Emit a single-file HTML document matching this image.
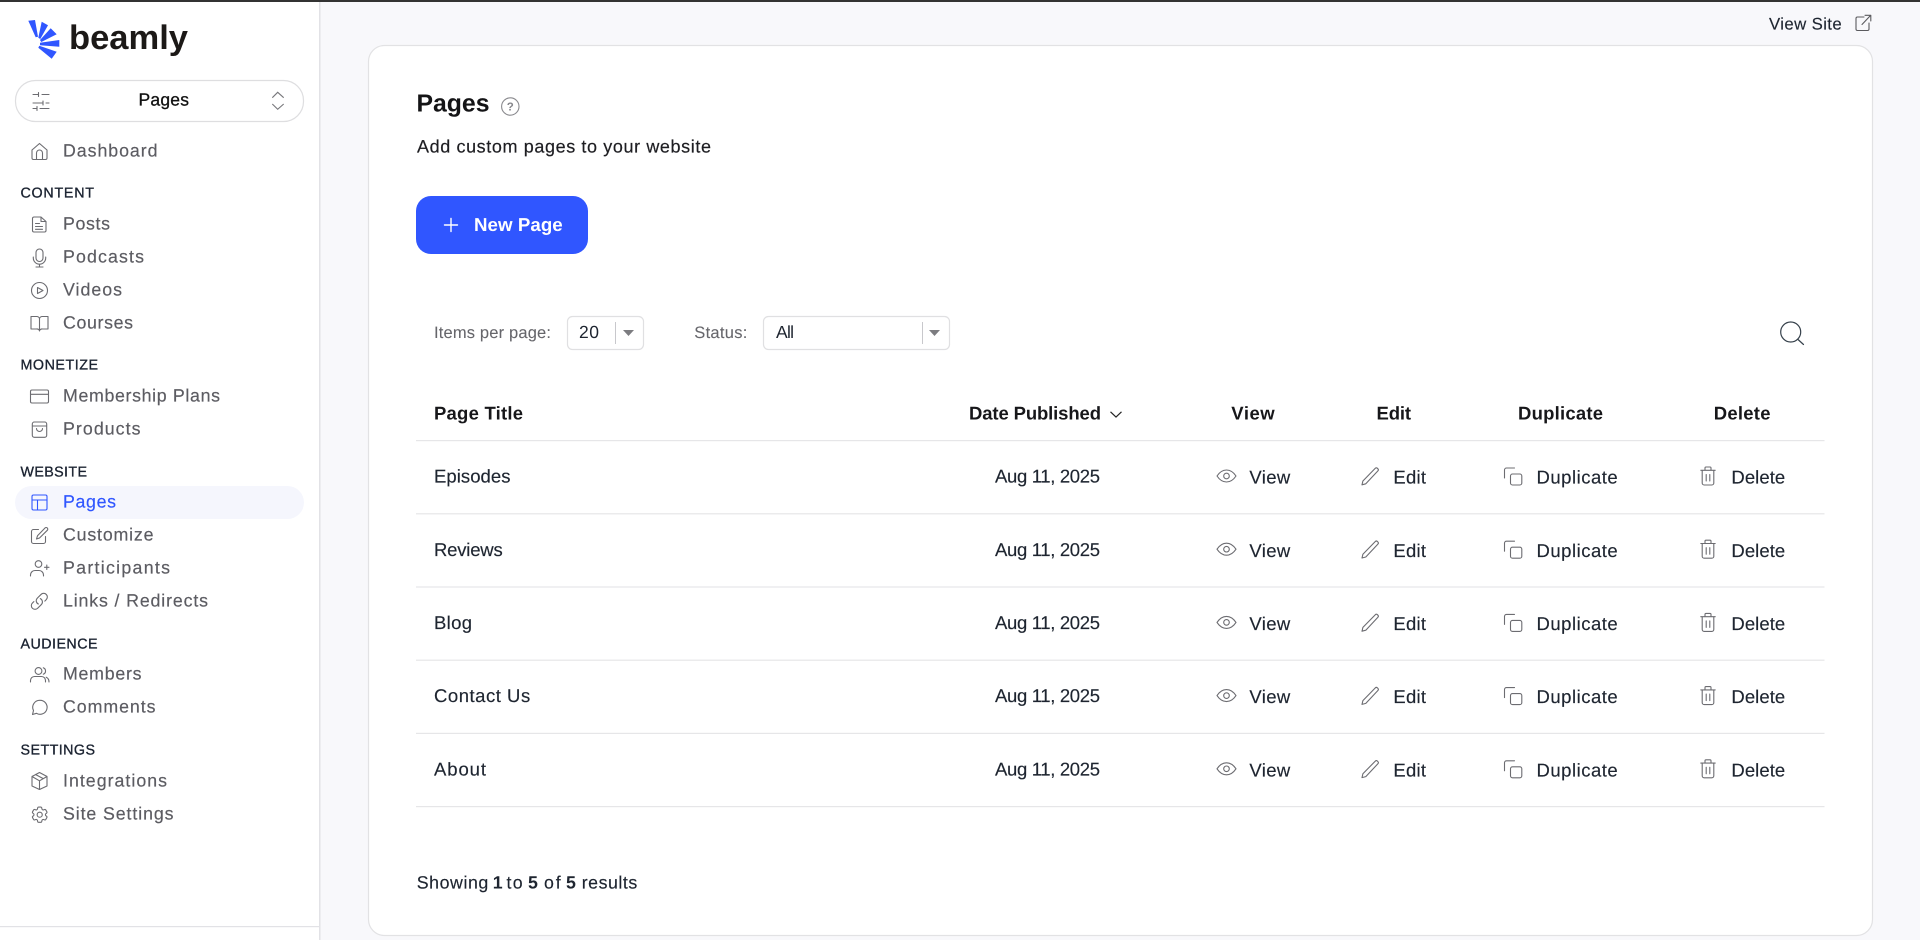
<!DOCTYPE html>
<html lang="en">
<head>
<meta charset="utf-8">
<title>Pages</title>
<style>
html,body{margin:0;padding:0;width:1920px;height:940px;overflow:hidden;background:#f8f8fb}
svg{display:block}
text{font-family:"Liberation Sans",sans-serif;text-rendering:geometricPrecision;white-space:pre}
.nav{font-size:17.800px;fill:#5c5c62;stroke:#5c5c62;stroke-width:.18;transform:translateY(-.7px)}
.lab{font-size:14.300px;fill:#1a2230;stroke:#1a2230;stroke-width:.32;transform:translateY(-.5px)}
.row{font-size:18.500px;fill:#1e2530;stroke:#1e2530;stroke-width:.16;transform:translateY(-.7px)}
.hd{font-size:18.500px;font-weight:700;fill:#17171a;transform:translateY(-.3px)}
.flt{font-size:16.500px;fill:#66666b;stroke:#66666b;stroke-width:.08;transform:translateY(-.5px)}
.ic{fill:none;stroke:#6c6c71;stroke-width:1.100;stroke-linecap:round;stroke-linejoin:round}
</style>
</head>
<body>
<svg width="1920" height="940" viewBox="0 0 1920 940" xmlns="http://www.w3.org/2000/svg">
<defs>
<g id="eye" class="ic"><path d="M1217 476C1220 471.500 1223 470 1226.500 470C1230 470 1233 471.500 1236 476C1233 480.500 1230 482 1226.500 482C1223 482 1220 480.500 1217 476Z"/><circle cx="1226.500" cy="476" r="2.800"/></g>
<g id="pen" class="ic"><path d="M1362 484.800L1362.900 481L1375.300 468.300a1.500 1.500 0 0 1 2.100 0L1377.900 468.800a1.500 1.500 0 0 1 0 2.100L1365.800 483.800Z"/></g>
<g id="dup" class="ic"><path d="M1504.500 478V470a2 2 0 0 1 2-2H1514.500"/><rect x="1510.500" y="474" width="11.300" height="11" rx="2"/></g>
<g id="trash" class="ic"><path d="M1700.800 470.300H1715.200M1705 470V468a1 1 0 0 1 1-1H1710a1 1 0 0 1 1 1V470M1702.200 470.300V483a2 2 0 0 0 2 2H1711.800a2 2 0 0 0 2-2V470.300M1706.200 474.500V481M1709.800 474.500V481"/></g>
</defs>

<rect width="1920" height="940" fill="#f8f8fb"/>

<!-- sidebar -->
<rect x="0" y="0" width="319" height="940" fill="#fff"/>
<rect x="319" y="0" width="1.500" height="940" fill="#e2e2e6"/>
<rect x="0" y="926" width="319" height="1.200" fill="#e2e2e6"/>
<rect x="0" y="0" width="1920" height="2" fill="#333"/>

<!-- logo -->
<g fill="#3056ff">
<path d="M28.300 20.700L35 20L38 36.700L35.700 37.300Z"/>
<path d="M41.700 21.700L48 25.300L40.300 39L38.300 37.700Z"/>
<path d="M50.700 28.300L56.700 34.300L41.300 42L40 40Z"/>
<path d="M59.300 40V46.700L40 45.300V42.700Z"/>
<path d="M56.700 51.700L51.700 58.700L38.300 47.700L39.300 45.700Z"/>
</g>
<text x="69" y="49" textLength="119" lengthAdjust="spacingAndGlyphs" fill="#1c1917" style="font-size:34px;font-weight:700">beamly</text>

<!-- page selector -->
<rect x="15.500" y="80.500" width="288" height="41" rx="20" fill="#fff" stroke="#dedee0" stroke-width="1.200"/>
<path class="ic" d="M33 94.500H38.500M38.500 92.500V96.500M42 94.500H49M33 103H43M43 101V105M46 103H49M33 108.500H37M37 106.500V110.500M40 108.500H49"/>
<text x="138.500" y="105.300" textLength="50.500" fill="#111" stroke="#111" stroke-width=".3" style="font-size:17.500px">Pages</text>
<path fill="none" stroke="#77777b" stroke-width="1.100" d="M272.300 97.700L277.700 92.300L283.700 97.700M272.300 104L277.700 109.300L283.700 104"/>

<!-- nav text -->
<text class="nav" x="63" y="157" textLength="94.500">Dashboard</text>
<text class="lab" x="20.500" y="198" textLength="73.500">CONTENT</text>
<text class="nav" x="63" y="230" textLength="47">Posts</text>
<text class="nav" x="63" y="263" textLength="81">Podcasts</text>
<text class="nav" x="63" y="296" textLength="59">Videos</text>
<text class="nav" x="63" y="329" textLength="70">Courses</text>
<text class="lab" x="20.500" y="370" textLength="77.500">MONETIZE</text>
<text class="nav" x="63" y="402" textLength="157">Membership Plans</text>
<text class="nav" x="63" y="435" textLength="77.500">Products</text>
<text class="lab" x="20.500" y="477" textLength="66.500">WEBSITE</text>
<rect x="15" y="486" width="289" height="33" rx="16.500" fill="#f5f6fd"/>
<text class="nav" x="63" y="508" textLength="53" style="fill:#3056ff;stroke:#3056ff">Pages</text>
<text class="nav" x="63" y="541" textLength="90.500">Customize</text>
<text class="nav" x="63" y="574" textLength="107">Participants</text>
<text class="nav" x="63" y="607" textLength="145">Links / Redirects</text>
<text class="lab" x="20.500" y="649" textLength="77">AUDIENCE</text>
<text class="nav" x="63" y="680" textLength="78.500">Members</text>
<text class="nav" x="63" y="713" textLength="92.500">Comments</text>
<text class="lab" x="20.500" y="755" textLength="74.500">SETTINGS</text>
<text class="nav" x="63" y="787" textLength="104">Integrations</text>
<text class="nav" x="63" y="820" textLength="110.500">Site Settings</text>

<!-- nav icons -->
<g class="ic">
<g transform="translate(29.500 141.500)"><path d="M2.500 8.500L10 2L17.500 8.500V16.500a1.500 1.500 0 0 1-1.500 1.500H4a1.500 1.500 0 0 1-1.500-1.500ZM7 18V11.500a3 3 0 0 1 6 0V18"/></g>
<g transform="translate(29.500 214.500)"><path d="M4.500 2.500H11.500L16.500 7V16a1.500 1.500 0 0 1-1.500 1.500H4.500A1.500 1.500 0 0 1 3 16V4A1.500 1.500 0 0 1 4.500 2.500ZM11.500 2.500V7H16.500M6 9H10M6 12H13M6 14.800H13"/></g>
<g transform="translate(29.500 247.500)"><rect x="6.500" y="1.500" width="7" height="12.500" rx="3.500"/><path d="M3.800 9.500V10.500a6.200 6.200 0 0 0 12.400 0V9.500M10 16.800V19.500M6.500 19.500H13.500"/></g>
<g transform="translate(29.500 280.500)"><circle cx="10" cy="10" r="8"/><path d="M8 7L13.500 10L8 13Z"/></g>
<g transform="translate(29.500 313.500)"><path d="M1.500 3H7a3 3 0 0 1 3 2a3 3 0 0 1 3-2H18.500V15.500H13a3 3 0 0 0-3 1.500a3 3 0 0 0-3-1.500H1.500ZM10 5V17.500"/></g>
<g transform="translate(29.500 386.500)"><rect x="1" y="3.500" width="18" height="13" rx="1.500"/><path d="M1 7.800H19"/></g>
<g transform="translate(29.500 419.500)"><rect x="2.800" y="2.500" width="14.400" height="15.300" rx="2"/><path d="M3 6.500H17M7 9a3 3 0 0 0 6 0"/></g>
<g transform="translate(29.500 492.500)" style="stroke:#3056ff"><rect x="2.500" y="2.500" width="15" height="15" rx="1.500"/><path d="M2.500 7.500H17.500M8 7.500V17.500"/></g>
<g transform="translate(29.500 525.500)"><path d="M9 4H4a2 2 0 0 0-2 2V16a2 2 0 0 0 2 2H14a2 2 0 0 0 2-2V11"/><path d="M15.500 2.500a1.600 1.600 0 0 1 2.300 2.300L10 12.500L7 13.500L8 10.300Z"/></g>
<g transform="translate(29.500 558.500)"><circle cx="9" cy="5.500" r="3.300"/><path d="M1 17.500V16.500a4.500 4.500 0 0 1 4.500-4.500H9.500a4.500 4.500 0 0 1 4.500 4.500V17.500M15 8.800H19.500M17.300 6.500V11"/></g>
<g transform="translate(29.500 591.500) scale(.82)" style="stroke-width:1.350"><path d="M13.190 8.688a4.500 4.500 0 0 1 1.242 7.244l-4.500 4.500a4.500 4.500 0 0 1-6.364-6.364l1.757-1.757m13.350-.622l1.757-1.757a4.500 4.500 0 0 0-6.364-6.364l-4.500 4.500a4.500 4.500 0 0 0 1.242 7.244"/></g>
<g transform="translate(29.500 664.500)"><circle cx="9" cy="6.500" r="3.400"/><path d="M1 17.500V16a4 4 0 0 1 4-4H12a4 4 0 0 1 4 4V17.500M13.800 3.300a3.400 3.400 0 0 1 0 6.400M19.500 17.500c0-2-1-4-2.800-4.800"/></g>
<g transform="translate(29.500 697.500)"><path d="M10.500 2.800a7 7 0 1 1-3.500 13L3 17L4 13A7 7 0 0 1 10.500 2.800Z"/></g>
<g transform="translate(29.500 771.500)"><path d="M10 1L17.500 5V14.500L10 18L2.500 14.500V5ZM2.500 5L10 9.300L17.500 5M10 9.300V18M6 3L13.500 7"/></g>
<g transform="translate(29.500 804.500) scale(.85)" style="stroke-width:1.300"><path d="M9.594 3.940c.09-.542.56-.94 1.110-.94h2.593c.55 0 1.020.398 1.110.94l.213 1.281c.063.374.313.686.645.870.074.040.147.083.22.127.324.196.72.257 1.075.124l1.217-.456a1.125 1.125 0 0 1 1.370.490l1.296 2.247a1.125 1.125 0 0 1-.26 1.431l-1.003.827c-.293.24-.438.613-.431.992a6.759 6.759 0 0 1 0 .255c-.007.378.138.75.43.99l1.005.828c.424.35.534.954.26 1.430l-1.298 2.247a1.125 1.125 0 0 1-1.369.491l-1.217-.456c-.355-.133-.75-.072-1.076.124a6.570 6.570 0 0 1-.22.128c-.331.183-.581.495-.644.869l-.213 1.280c-.09.543-.56.941-1.110.941h-2.594c-.55 0-1.020-.398-1.110-.94l-.213-1.281c-.062-.374-.312-.686-.644-.87a6.520 6.520 0 0 1-.22-.127c-.325-.196-.72-.257-1.076-.124l-1.217.456a1.125 1.125 0 0 1-1.369-.49l-1.297-2.247a1.125 1.125 0 0 1 .26-1.431l1.004-.827c.292-.24.437-.613.43-.992a6.932 6.932 0 0 1 0-.255c.007-.378-.138-.75-.43-.99l-1.004-.828a1.125 1.125 0 0 1-.26-1.430l1.297-2.247a1.125 1.125 0 0 1 1.370-.491l1.216.456c.356.133.751.072 1.076-.124.072-.044.146-.087.22-.128.332-.183.582-.495.644-.869l.214-1.281Z"/><circle cx="12" cy="12" r="3"/></g>
</g>

<!-- view site -->
<text x="1769" y="29.500" textLength="72.700" fill="#1e2530" stroke="#1e2530" stroke-width=".14" style="font-size:16.800px">View Site</text>
<path fill="none" stroke="#5a5a5e" stroke-width="1.100" stroke-linecap="round" stroke-linejoin="round" d="M1864 17H1857.500a1.500 1.500 0 0 0-1.500 1.500V29a1.500 1.500 0 0 0 1.500 1.500H1867.500a1.500 1.500 0 0 0 1.500-1.500V23M1862 24.500L1870.500 15.500M1865 15.300H1870.800V21"/>

<!-- card -->
<rect x="368.500" y="45.500" width="1504" height="890" rx="16" fill="#fff" stroke="#e2e2e4" stroke-width="1.200"/>

<text x="416.500" y="111.300" textLength="73" fill="#141416" style="font-size:24.800px;font-weight:700">Pages</text>
<circle cx="510.300" cy="106.500" r="8.700" fill="none" stroke="#8a8a8e" stroke-width="1.100"/>
<text x="510.300" y="110.500" text-anchor="middle" fill="#85858a" style="font-size:11.500px;font-weight:700">?</text>
<text x="417" y="152.300" textLength="294" fill="#1e1e22" stroke="#1e1e22" stroke-width=".2" style="font-size:18px">Add custom pages to your website</text>

<rect x="416" y="196" width="172" height="58" rx="15" fill="#3056ff"/>
<path stroke="#fff" stroke-width="1.400" stroke-linecap="round" d="M444.500 225H457.500M451 218.500V231.500"/>
<text x="474" y="231" textLength="88.700" fill="#fff" style="font-size:18.700px;font-weight:700">New Page</text>

<!-- filters -->
<text class="flt" x="434" y="338.300" textLength="117">Items per page:</text>
<rect x="567.500" y="316.500" width="76" height="33" rx="5" fill="#fff" stroke="#e0e0e2" stroke-width="1.200"/>
<text x="579" y="338" textLength="20" fill="#1e2530" style="font-size:17.500px">20</text>
<rect x="615" y="322" width="1" height="22" fill="#c8c8cc"/>
<path d="M623 330H634L628.500 336Z" fill="#7c7c80"/>
<text class="flt" x="694.300" y="338.300" textLength="53">Status:</text>
<rect x="763.500" y="316.500" width="186" height="33" rx="5" fill="#fff" stroke="#e0e0e2" stroke-width="1.200"/>
<text x="776" y="338" textLength="18" fill="#1e2530" style="font-size:17.500px">All</text>
<rect x="922" y="322" width="1" height="22" fill="#c8c8cc"/>
<path d="M929 330H940L934.500 336Z" fill="#7c7c80"/>
<circle cx="1790.700" cy="332" r="10" fill="none" stroke="#36414b" stroke-width="1.200"/>
<path d="M1798 339.500L1803.500 344.500" stroke="#36414b" stroke-width="1.200" stroke-linecap="round"/>

<!-- table header -->
<text class="hd" x="434" y="420" textLength="89">Page Title</text>
<text class="hd" x="969" y="420" textLength="132">Date Published</text>
<path d="M1110.500 411.800L1116 417L1121.500 411.800" fill="none" stroke="#222" stroke-width="1.200"/>
<text class="hd" x="1231.300" y="420" textLength="43.400">View</text>
<text class="hd" x="1376.500" y="420" textLength="34.500">Edit</text>
<text class="hd" x="1518" y="420" textLength="85">Duplicate</text>
<text class="hd" x="1713.700" y="420" textLength="56.800">Delete</text>

<!-- rules -->
<g fill="#e6e6e8">
<rect x="416" y="440" width="1408.500" height="1.200"/>
<rect x="416" y="513.200" width="1408.500" height="1.200"/>
<rect x="416" y="586.400" width="1408.500" height="1.200"/>
<rect x="416" y="659.600" width="1408.500" height="1.200"/>
<rect x="416" y="732.800" width="1408.500" height="1.200"/>
<rect x="416" y="806" width="1408.500" height="1.200"/>
</g>

<!-- row 1 -->
<text class="row" x="434" y="483.300" textLength="76.500">Episodes</text>
<text class="row" x="995" y="483.300" textLength="105">Aug 11, 2025</text>
<use href="#eye"/><use href="#pen"/><use href="#dup"/><use href="#trash"/>
<text class="row" x="1249.400" y="484.300" textLength="40.900">View</text>
<text class="row" x="1393.400" y="484.300" textLength="32.600">Edit</text>
<text class="row" x="1536.500" y="484.300" textLength="81.200">Duplicate</text>
<text class="row" x="1731.400" y="484.300" textLength="53.800">Delete</text>

<!-- row 2 -->
<text class="row" x="434" y="556.500" textLength="68.700">Reviews</text>
<text class="row" x="995" y="556.500" textLength="105">Aug 11, 2025</text>
<g transform="translate(0 73.200)"><use href="#eye"/><use href="#pen"/><use href="#dup"/><use href="#trash"/></g>
<text class="row" x="1249.400" y="557.500" textLength="40.900">View</text>
<text class="row" x="1393.400" y="557.500" textLength="32.600">Edit</text>
<text class="row" x="1536.500" y="557.500" textLength="81.200">Duplicate</text>
<text class="row" x="1731.400" y="557.500" textLength="53.800">Delete</text>

<!-- row 3 -->
<text class="row" x="434" y="629.700" textLength="38">Blog</text>
<text class="row" x="995" y="629.700" textLength="105">Aug 11, 2025</text>
<g transform="translate(0 146.400)"><use href="#eye"/><use href="#pen"/><use href="#dup"/><use href="#trash"/></g>
<text class="row" x="1249.400" y="630.700" textLength="40.900">View</text>
<text class="row" x="1393.400" y="630.700" textLength="32.600">Edit</text>
<text class="row" x="1536.500" y="630.700" textLength="81.200">Duplicate</text>
<text class="row" x="1731.400" y="630.700" textLength="53.800">Delete</text>

<!-- row 4 -->
<text class="row" x="434" y="702.900" textLength="96.200">Contact Us</text>
<text class="row" x="995" y="702.900" textLength="105">Aug 11, 2025</text>
<g transform="translate(0 219.600)"><use href="#eye"/><use href="#pen"/><use href="#dup"/><use href="#trash"/></g>
<text class="row" x="1249.400" y="703.900" textLength="40.900">View</text>
<text class="row" x="1393.400" y="703.900" textLength="32.600">Edit</text>
<text class="row" x="1536.500" y="703.900" textLength="81.200">Duplicate</text>
<text class="row" x="1731.400" y="703.900" textLength="53.800">Delete</text>

<!-- row 5 -->
<text class="row" x="434" y="776.100" textLength="52">About</text>
<text class="row" x="995" y="776.100" textLength="105">Aug 11, 2025</text>
<g transform="translate(0 292.800)"><use href="#eye"/><use href="#pen"/><use href="#dup"/><use href="#trash"/></g>
<text class="row" x="1249.400" y="777.100" textLength="40.900">View</text>
<text class="row" x="1393.400" y="777.100" textLength="32.600">Edit</text>
<text class="row" x="1536.500" y="777.100" textLength="81.200">Duplicate</text>
<text class="row" x="1731.400" y="777.100" textLength="53.800">Delete</text>

<!-- pagination summary -->
<text class="row" style="font-size:17.800px" x="416.700" y="889" textLength="71.600">Showing</text>
<text style="font-size:17.800px;font-weight:700" fill="#1e2530" x="492.800" y="888.300">1</text>
<text class="row" style="font-size:17.800px" x="506.500" y="889" textLength="16.200">to</text>
<text style="font-size:17.800px;font-weight:700" fill="#1e2530" x="528" y="888.300">5</text>
<text class="row" style="font-size:17.800px" x="544" y="889" textLength="16.700">of</text>
<text style="font-size:17.800px;font-weight:700" fill="#1e2530" x="566" y="888.300">5</text>
<text class="row" style="font-size:17.800px" x="581.700" y="889" textLength="55.600">results</text>
</svg>
</body>
</html>
